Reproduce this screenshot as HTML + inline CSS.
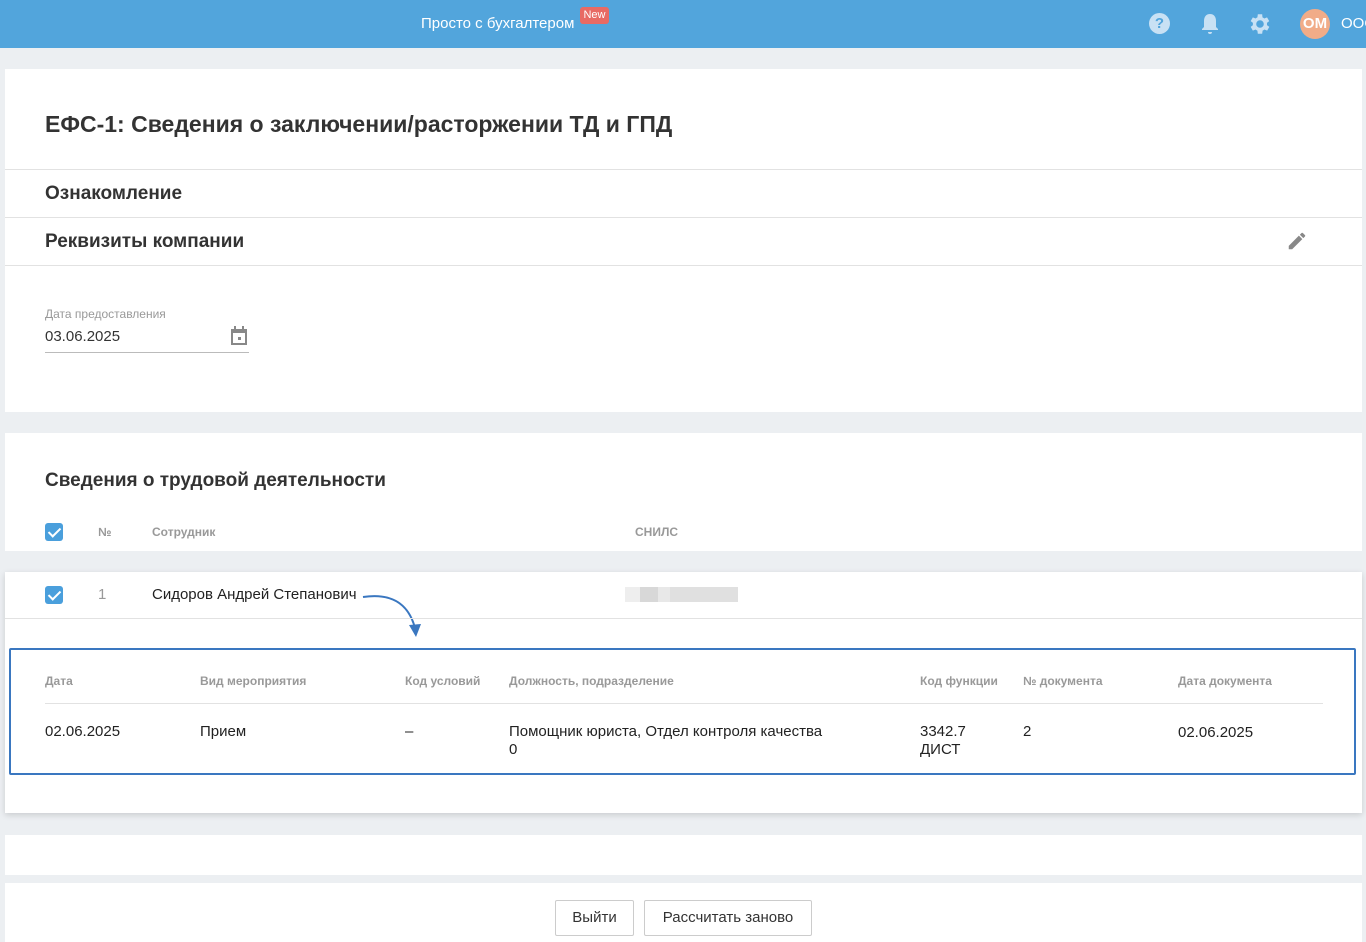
<!DOCTYPE html><html><head><meta charset="utf-8"><style>
*{box-sizing:border-box;margin:0;padding:0}
body{width:1366px;height:942px;overflow:hidden;background:#eceff2;font-family:"Liberation Sans",sans-serif;color:#222;position:relative}
.a{position:absolute}
.card{position:absolute;left:5px;width:1357px;background:#fff}
.hd{font-weight:bold;color:#999;font-size:12px}
.line{position:absolute;left:0;right:0;height:1px;background:#e2e2e2}
.cb{position:absolute;width:18px;height:18px;background:#4a9fdc;border-radius:3px}
.cb:after{content:"";position:absolute;left:6px;top:2px;width:5px;height:10px;border:solid #fff;border-width:0 2px 2px 0;transform:rotate(45deg)}
.btn{position:absolute;top:900px;height:36px;border:1px solid #ccc;border-radius:2px;background:#fff;font-size:15px;line-height:34px;text-align:center;color:#333}
</style></head><body>
<div class="a" style="left:0;top:0;width:1366px;height:48px;background:#52a5dc"></div>
<div class="a" style="left:421px;top:15px;color:#fff;font-size:15px">Просто с бухгалтером</div>
<div class="a" style="left:580px;top:7px;width:29px;height:17px;background:#e86a64;border-radius:3px;color:#fff;font-size:11px;text-align:center;line-height:16px">New</div>
<div class="a" style="left:1149px;top:13px;width:21px;height:21px;border-radius:50%;background:#c8e1f4;color:#52a5dc;font-weight:bold;font-size:15px;text-align:center;line-height:21px">?</div>
<svg class="a" style="left:1200px;top:12px" width="20" height="24" viewBox="0 0 20 24"><path d="M10 2c-4 0-6 3-6 7v6l-2 2v1h16v-1l-2-2V9c0-4-2-7-6-7zM8 20h4a2 2 0 0 1-4 0z" fill="#c8e1f4"/></svg>
<svg class="a" style="left:1247px;top:11px" width="26" height="26" viewBox="0 0 24 24"><path fill="#c8e1f4" d="M19.4 13c.04-.3.06-.6.06-1s-.02-.7-.06-1l2.1-1.6-2-3.5-2.5 1c-.5-.4-1.1-.7-1.7-1L15 3h-4l-.4 2.9c-.6.3-1.2.6-1.7 1l-2.5-1-2 3.5L6.5 11c0 .3-.1.6-.1 1s0 .7.1 1l-2.1 1.6 2 3.5 2.5-1c.5.4 1.1.7 1.7 1L11 21h4l.4-2.9c.6-.3 1.2-.6 1.7-1l2.5 1 2-3.5zM13 15.5A3.5 3.5 0 1 1 13 8.5a3.5 3.5 0 0 1 0 7z" transform="translate(-1 0)"/></svg>
<div class="a" style="left:1300px;top:9px;width:30px;height:30px;border-radius:50%;background:#f1ac88;color:#fff;font-weight:bold;font-size:15px;text-align:center;line-height:30px">OM</div>
<div class="a" style="left:1341px;top:15px;color:#fff;font-size:15px">ООО</div>

<div class="card" style="top:69px;height:343px">
<div class="a" style="left:40px;top:42px;font-size:23px;font-weight:bold;color:#333">ЕФС-1: Сведения о заключении/расторжении ТД и ГПД</div>
<div class="line" style="top:100px"></div>
<div class="a" style="left:40px;top:114px;font-size:19px;font-weight:bold;color:#333">Ознакомление</div>
<div class="line" style="top:148px"></div>
<div class="a" style="left:40px;top:162px;font-size:19px;font-weight:bold;color:#333">Реквизиты компании</div>
<svg class="a" style="left:1281px;top:161px" width="22" height="22" viewBox="0 0 24 24"><path fill="#888" d="M3 17.25V21h3.75L17.8 9.94l-3.75-3.75zM20.7 7.04a1 1 0 0 0 0-1.41l-2.34-2.34a1 1 0 0 0-1.41 0l-1.83 1.83 3.75 3.75z"/></svg>
<div class="line" style="top:196px"></div>
<div class="a" style="left:40px;top:238px;font-size:12px;color:#999">Дата предоставления</div>
<div class="a" style="left:40px;top:259px;font-size:15px;color:#333">03.06.2025</div>
<svg class="a" style="left:224px;top:256px" width="20" height="22" viewBox="0 0 20 22"><path fill="#888" d="M2 4h16v16H2zM4 8v10h12V8zM5 1h2v4H5zM13 1h2v4h-2zM9 12h3v3H9z"/></svg>
<div class="a" style="left:40px;top:283px;width:204px;height:1px;background:#bbb"></div>
</div>

<div class="card" style="top:433px;height:118px">
<div class="a" style="left:40px;top:37px;font-size:19px;font-weight:bold;color:#333">Сведения о трудовой деятельности</div>
<div class="cb" style="left:40px;top:90px"></div>
<div class="a hd" style="left:93px;top:92px">№</div>
<div class="a hd" style="left:147px;top:92px">Сотрудник</div>
<div class="a hd" style="left:630px;top:92px">СНИЛС</div>
</div>

<div class="card" style="top:572px;height:241px;box-shadow:0 2px 6px rgba(0,0,0,.15)">
<div class="cb" style="left:40px;top:14px"></div>
<div class="a" style="left:93px;top:14px;font-size:15px;color:#999">1</div>
<div class="a" style="left:147px;top:14px;font-size:15px;color:#222">Сидоров Андрей Степанович</div>
<div class="a" style="left:620px;top:15px;width:113px;height:15px;background:linear-gradient(90deg,#eee 0 15px,#d8d8d8 15px 33px,#e8e8e8 33px 45px,#e0e0e0 45px)"></div>
<svg class="a" style="left:355px;top:18px" width="70" height="52" viewBox="0 0 70 52"><path d="M3 7C30 3 48 12 55 38" stroke="#3a77c0" stroke-width="2" fill="none"/><path d="M49 35l7 12 5-13z" fill="#3a77c0"/></svg>
<div class="line" style="top:46px"></div>
<div class="a" style="left:4px;top:76px;width:1347px;height:127px;border:2px solid #3a77c0;border-radius:2px"></div>
<div class="a hd" style="left:40px;top:102px">Дата</div>
<div class="a hd" style="left:195px;top:102px">Вид мероприятия</div>
<div class="a hd" style="left:400px;top:102px">Код условий</div>
<div class="a hd" style="left:504px;top:102px">Должность, подразделение</div>
<div class="a hd" style="left:915px;top:102px">Код функции</div>
<div class="a hd" style="left:1018px;top:102px">№ документа</div>
<div class="a hd" style="left:1173px;top:102px">Дата документа</div>
<div class="a" style="left:40px;top:131px;width:1278px;height:1px;background:#e2e2e2"></div>
<div class="a" style="left:40px;top:151px;font-size:15px">02.06.2025</div>
<div class="a" style="left:195px;top:151px;font-size:15px">Прием</div>
<div class="a" style="left:400px;top:151px;font-size:15px">–</div>
<div class="a" style="left:504px;top:151px;font-size:15px;line-height:18px">Помощник юриста, Отдел контроля качества<br>0</div>
<div class="a" style="left:915px;top:151px;font-size:15px;line-height:18px">3342.7<br>ДИСТ</div>
<div class="a" style="left:1018px;top:151px;font-size:15px">2</div>
<div class="a" style="left:1173px;top:152px;font-size:15px">02.06.2025</div>
</div>

<div class="card" style="top:835px;height:40px"></div>
<div class="card" style="top:883px;height:59px"></div>
<div class="btn" style="left:555px;width:79px">Выйти</div>
<div class="btn" style="left:644px;width:168px">Рассчитать заново</div>
</body></html>
